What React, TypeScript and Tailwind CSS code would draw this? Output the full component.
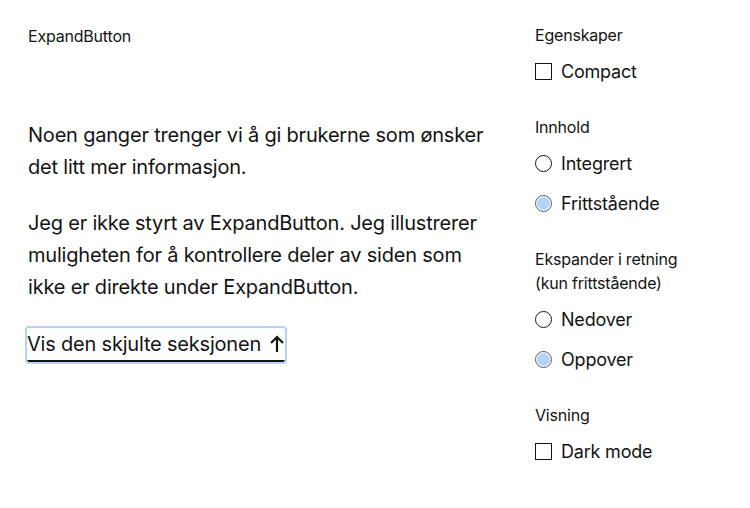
import { useState } from 'react';

function Checkbox({ label, checked, onChange }: { label: string; checked: boolean; onChange: () => void }) {
  return (
    <label className="flex items-center gap-[9px] h-[40px] cursor-pointer">
      <span className="w-[17px] h-[17px] border border-[#131313] bg-white flex items-center justify-center">
        {checked && <span className="w-[9px] h-[9px] bg-[#131313]" />}
      </span>
      <input type="checkbox" className="hidden" checked={checked} onChange={onChange} />
      <span className="text-[18px]">{label}</span>
    </label>
  );
}

function Radio({ label, checked, onChange }: { label: string; checked: boolean; onChange: () => void }) {
  return (
    <label className="flex items-center gap-[9px] h-[40px] cursor-pointer">
      <span
        className={
          checked
            ? 'w-[17px] h-[17px] rounded-full border border-[#5a5a5a] bg-white flex items-center justify-center'
            : 'w-[17px] h-[17px] rounded-full border border-[#131313] bg-white'
        }
      >
        {checked && <span className="w-[13px] h-[13px] rounded-full bg-[#b3d3fb]" />}
      </span>
      <input type="radio" className="hidden" checked={checked} onChange={onChange} />
      <span className="text-[18px]">{label}</span>
    </label>
  );
}

export default function App() {
  const [compact, setCompact] = useState(false);
  const [innhold, setInnhold] = useState('frittstaende');
  const [retning, setRetning] = useState('opp');
  const [dark, setDark] = useState(false);

  return (
    <div
      className="min-h-screen bg-white text-[#131313] flex tracking-[-0.2px]"
      style={{ fontFamily: 'Inter, "Liberation Sans", Arial, sans-serif' }}
    >
      {/* venstre: eksempel */}
      <div className="w-[535px] pl-[28px] pt-[26px]">
        <p className="text-[16px] leading-[20px]">ExpandButton</p>
        <div className="mt-[73px] w-[470px] text-[20px] leading-[32px]">
          <p>Noen ganger trenger vi å gi brukerne som ønsker det litt mer informasjon.</p>
          <p className="mt-[24px]">
            Jeg er ikke styrt av ExpandButton. Jeg illustrerer muligheten for å kontrollere deler av siden som
            ikke er direkte under ExpandButton.
          </p>
          <div className="mt-[25px]">
            <button className="inline-flex items-center gap-[8px] h-[34px] -ml-[1px] px-0 border-b-2 border-[#131313] outline-2 outline-[#b3d3fb] rounded-[2px] text-[20px] leading-[32px] tracking-[-0.2px]">
              Vis den skjulte seksjonen
              <svg width="16" height="18" viewBox="0 0 16 18" fill="none" stroke="#131313" strokeWidth="2.2">
                <path d="M8 17V2" />
                <path d="M2 8l6-6 6 6" />
              </svg>
            </button>
          </div>
        </div>
      </div>

      {/* høyre: egenskaper */}
      <div className="pt-[25px] flex-1">
        <p className="text-[16px] leading-[20px]">Egenskaper</p>
        <div className="mt-[6px]">
          <Checkbox label="Compact" checked={compact} onChange={() => setCompact(!compact)} />
        </div>

        <p className="mt-[26px] text-[16px] leading-[20px]">Innhold</p>
        <div className="mt-[6px]">
          <Radio label="Integrert" checked={innhold === 'integrert'} onChange={() => setInnhold('integrert')} />
          <Radio label="Frittstående" checked={innhold === 'frittstaende'} onChange={() => setInnhold('frittstaende')} />
        </div>

        <p className="mt-[24px] text-[16px] leading-[24px]">
          Ekspander i retning
          <br />
          (kun frittstående)
        </p>
        <div className="mt-[4px]">
          <Radio label="Nedover" checked={retning === 'ned'} onChange={() => setRetning('ned')} />
          <Radio label="Oppover" checked={retning === 'opp'} onChange={() => setRetning('opp')} />
        </div>

        <p className="mt-[26px] text-[16px] leading-[20px]">Visning</p>
        <div className="mt-[6px]">
          <Checkbox label="Dark mode" checked={dark} onChange={() => setDark(!dark)} />
        </div>
      </div>
    </div>
  );
}
